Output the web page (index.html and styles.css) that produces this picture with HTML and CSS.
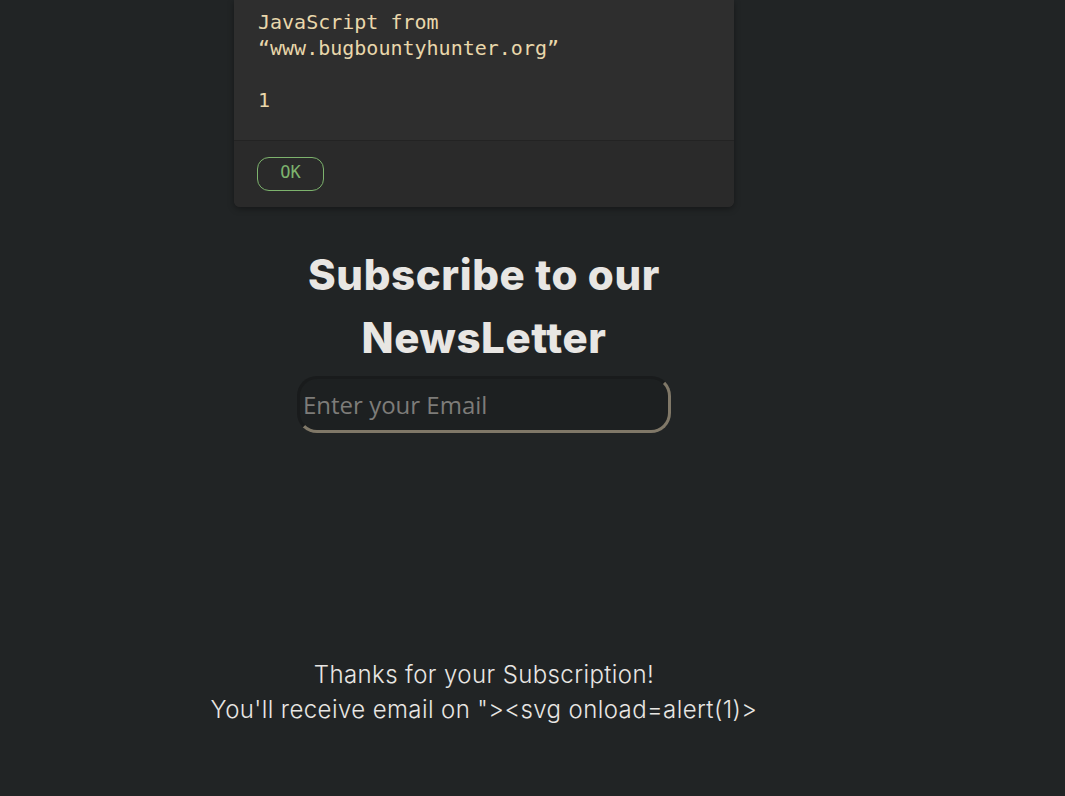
FILE: index.html
```html
<!DOCTYPE html>
<html>
<head>
<meta charset="utf-8">
<link rel="stylesheet" href="styles.css">
</head>
<body>
<div class="page">
  <div class="dialog">
    <div class="dialog-body">
      <div class="line">JavaScript from</div>
      <div class="line">“www.bugbountyhunter.org”</div>
      <div class="line">&nbsp;</div>
      <div class="line">1</div>
    </div>
    <div class="dialog-footer">
      <button class="ok">OK</button>
    </div>
  </div>
  <h1 class="title">Subscribe to our<br>NewsLetter</h1>
  <input class="email" type="text" placeholder="Enter your Email">
  <p class="thanks">Thanks for your Subscription!<br>You'll receive email on "&gt;&lt;svg onload=alert(1)&gt;</p>
</div>
</body>
</html>
```
FILE: styles.css
```css
html, body {
  margin: 0;
  padding: 0;
  background: #212425;
  height: 100%;
  overflow: hidden;
}
.page {
  width: 968px;
  display: flex;
  flex-direction: column;
  align-items: center;
}
.dialog {
  width: 500px;
  background: #2e2e2e;
  border-radius: 0 0 6px 6px;
  box-shadow: 0 2px 6px rgba(0,0,0,0.35);
  font-family: "DejaVu Sans Mono", "Liberation Mono", monospace;
  color: #e9d7ab;
}
.dialog-body {
  padding: 9px 23px 27px 24px;
  font-size: 20px;
  line-height: 26px;
}
.dialog-footer {
  border-top: 1px solid #232323;
  background: #2a2a2a;
  padding: 16px 23px 16px 23px;
  border-radius: 0 0 6px 6px;
}
.ok {
  width: 67px;
  height: 34px;
  background: transparent;
  border: 1px solid #7db36d;
  border-radius: 12px;
  color: #7db36d;
  font-family: "DejaVu Sans Mono", monospace;
  font-size: 17px;
  padding: 0 0 4px 0;
}
.title {
  margin: 36px 0 0 0;
  font-family: "Inter", "Lato", sans-serif;
  font-weight: 800;
  font-size: 42px;
  line-height: 63px;
  color: #e8e6e3;
  text-align: center;
  letter-spacing: 0.6px;
}
.email {
  margin-top: 7px;
  box-sizing: border-box;
  width: 374px;
  height: 57px;
  border-radius: 20px;
  border: 3px solid #807868;
  border-top-color: #191b1c;
  border-left-color: #191b1c;
  background: #1d2021;
  font-family: "Open Sans", sans-serif;
  font-size: 24px;
  color: #e8e6e3;
  padding: 0 0 0 3px;
  outline: none;
}
.email::placeholder {
  color: #7d7c79;
}
.thanks {
  margin: 224px 0 0 0;
  font-family: "Inter", "Lato", sans-serif;
  font-weight: 300;
  font-size: 24px;
  line-height: 35px;
  color: #e8e6e3;
  text-align: center;
  letter-spacing: 0.4px;
}
```
